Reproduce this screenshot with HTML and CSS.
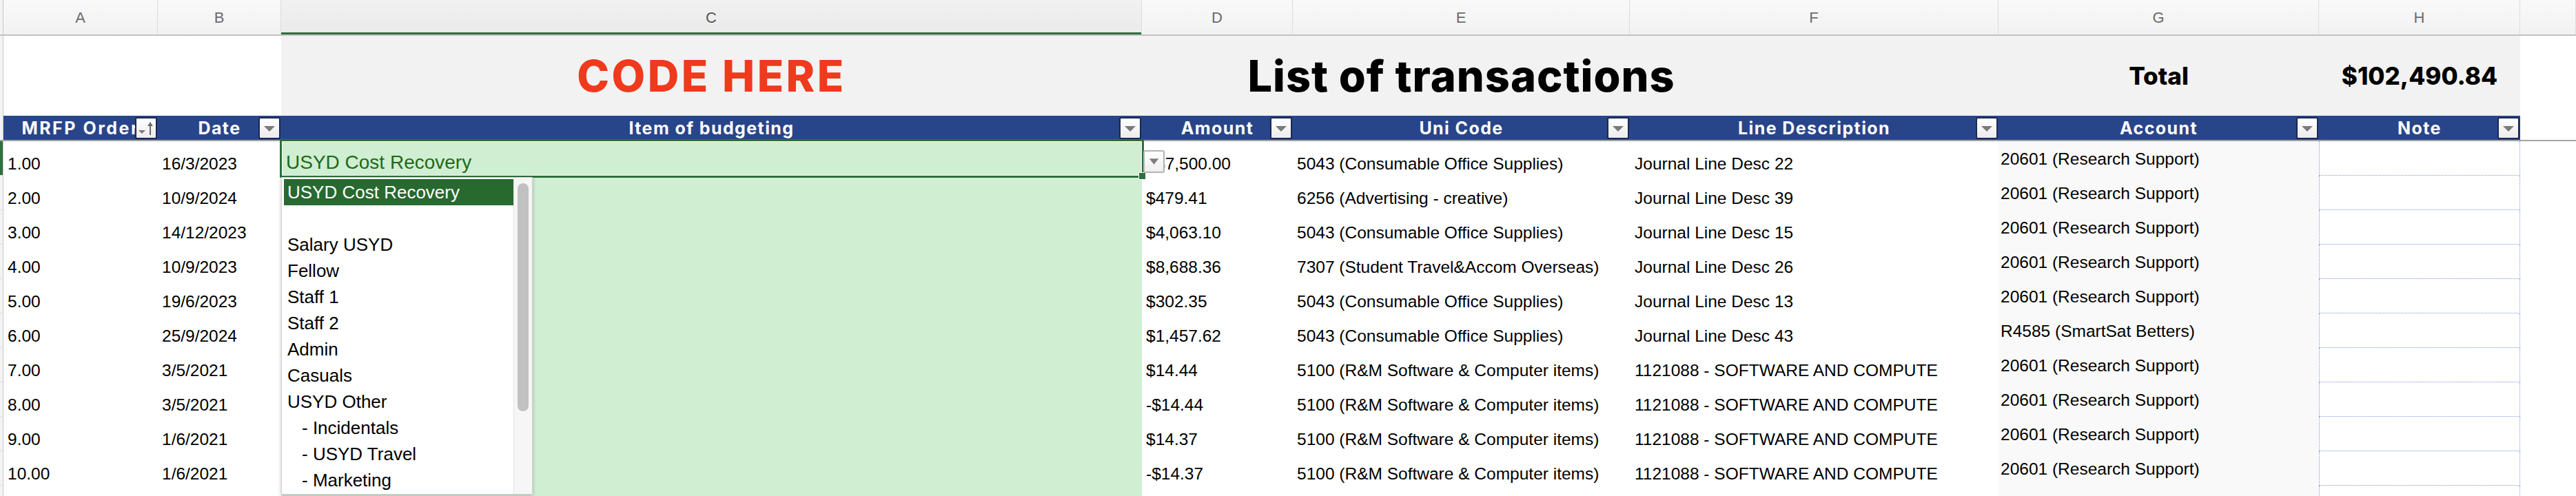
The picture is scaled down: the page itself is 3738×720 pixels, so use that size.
FILE: index.html
```html
<!DOCTYPE html>
<html>
<head>
<meta charset="utf-8">
<link rel="stylesheet" href="styles.css">
</head>
<body>
<div class="sheet">
  <div class="row colhead">
    <div class="gutter"></div>
    <div class="ch">A</div>
    <div class="ch">B</div>
    <div class="ch ch-sel">C</div>
    <div class="ch">D</div>
    <div class="ch">E</div>
    <div class="ch">F</div>
    <div class="ch">G</div>
    <div class="ch">H</div>
    <div class="ch"></div>
  </div>

  <div class="row titlerow">
    <div class="gutter"></div>
    <div class="tc"></div>
    <div class="tc"></div>
    <div class="tc grey"><span class="code-here">CODE HERE</span></div>
    <div class="tc grey"></div>
    <div class="tc grey"><span class="list-title">List of transactions</span></div>
    <div class="tc grey"></div>
    <div class="tc grey"><span class="total">Total</span></div>
    <div class="tc grey"><span class="total">$102,490.84</span></div>
    <div class="tc"></div>
  </div>

  <div class="row thead">
    <div class="gutter"></div>
    <div class="th th-wide"><span>MRFP Order</span>
      <div class="fbtn"><svg width="28" height="28" viewBox="0 0 28 28"><polygon points="3,17 13,17 8,22" fill="#787878"/><path d="M20 24 V9" stroke="#6a6a6a" stroke-width="2"/><polygon points="16,11 20,5 24,11" fill="#6a6a6a"/></svg></div>
    </div>
    <div class="th"><span>Date</span><div class="fbtn"><svg width="28" height="28" viewBox="0 0 28 28"><polygon points="6,11 22,11 14,19" fill="#7a7a7a"/></svg></div></div>
    <div class="th"><span>Item of budgeting</span><div class="fbtn"><svg width="28" height="28" viewBox="0 0 28 28"><polygon points="6,11 22,11 14,19" fill="#7a7a7a"/></svg></div></div>
    <div class="th"><span>Amount</span><div class="fbtn"><svg width="28" height="28" viewBox="0 0 28 28"><polygon points="6,11 22,11 14,19" fill="#7a7a7a"/></svg></div></div>
    <div class="th"><span>Uni Code</span><div class="fbtn"><svg width="28" height="28" viewBox="0 0 28 28"><polygon points="6,11 22,11 14,19" fill="#7a7a7a"/></svg></div></div>
    <div class="th"><span>Line Description</span><div class="fbtn"><svg width="28" height="28" viewBox="0 0 28 28"><polygon points="6,11 22,11 14,19" fill="#7a7a7a"/></svg></div></div>
    <div class="th"><span>Account</span><div class="fbtn"><svg width="28" height="28" viewBox="0 0 28 28"><polygon points="6,11 22,11 14,19" fill="#7a7a7a"/></svg></div></div>
    <div class="th"><span>Note</span><div class="fbtn"><svg width="28" height="28" viewBox="0 0 28 28"><polygon points="6,11 22,11 14,19" fill="#7a7a7a"/></svg></div></div>
    <div class="th-blank"></div>
  </div>

  <div class="row data">
    <div class="gutter gsel"></div>
    <div class="td">1.00</div><div class="td">16/3/2023</div>
    <div class="td item sel">USYD Cost Recovery
      <div class="handle"></div>
      <div class="ddbtn"><svg width="28" height="28" viewBox="0 0 28 28"><polygon points="7,9 21,9 14,18" fill="#7d7d7d"/></svg></div>
      <div class="dropdown">
        <ul class="dlist">
          <li class="on">USYD Cost Recovery</li>
          <li></li>
          <li>Salary USYD</li>
          <li>Fellow</li>
          <li>Staff 1</li>
          <li>Staff 2</li>
          <li>Admin</li>
          <li>Casuals</li>
          <li>USYD Other</li>
          <li class="sub">- Incidentals</li>
          <li class="sub">- USYD Travel</li>
          <li class="sub">- Marketing</li>
        </ul>
        <div class="track"><div class="thumb"></div></div>
      </div>
    </div>
    <div class="td amt1">$7,500.00</div><div class="td">5043 (Consumable Office Supplies)</div><div class="td pf">Journal Line Desc 22</div><div class="td acct">20601 (Research Support)</div><div class="td note"></div><div class="td"></div>
  </div>
  <div class="row data">
    <div class="gutter"></div>
    <div class="td">2.00</div><div class="td">10/9/2024</div><div class="td item"></div>
    <div class="td">$479.41</div><div class="td">6256 (Advertising - creative)</div><div class="td pf">Journal Line Desc 39</div><div class="td acct">20601 (Research Support)</div><div class="td note"></div><div class="td"></div>
  </div>
  <div class="row data">
    <div class="gutter"></div>
    <div class="td">3.00</div><div class="td">14/12/2023</div><div class="td item"></div>
    <div class="td">$4,063.10</div><div class="td">5043 (Consumable Office Supplies)</div><div class="td pf">Journal Line Desc 15</div><div class="td acct">20601 (Research Support)</div><div class="td note"></div><div class="td"></div>
  </div>
  <div class="row data">
    <div class="gutter"></div>
    <div class="td">4.00</div><div class="td">10/9/2023</div><div class="td item"></div>
    <div class="td">$8,688.36</div><div class="td">7307 (Student Travel&amp;Accom Overseas)</div><div class="td pf">Journal Line Desc 26</div><div class="td acct">20601 (Research Support)</div><div class="td note"></div><div class="td"></div>
  </div>
  <div class="row data">
    <div class="gutter"></div>
    <div class="td">5.00</div><div class="td">19/6/2023</div><div class="td item"></div>
    <div class="td">$302.35</div><div class="td">5043 (Consumable Office Supplies)</div><div class="td pf">Journal Line Desc 13</div><div class="td acct">20601 (Research Support)</div><div class="td note"></div><div class="td"></div>
  </div>
  <div class="row data">
    <div class="gutter"></div>
    <div class="td">6.00</div><div class="td">25/9/2024</div><div class="td item"></div>
    <div class="td">$1,457.62</div><div class="td">5043 (Consumable Office Supplies)</div><div class="td pf">Journal Line Desc 43</div><div class="td acct">R4585 (SmartSat Betters)</div><div class="td note"></div><div class="td"></div>
  </div>
  <div class="row data">
    <div class="gutter"></div>
    <div class="td">7.00</div><div class="td">3/5/2021</div><div class="td item"></div>
    <div class="td">$14.44</div><div class="td">5100 (R&amp;M Software &amp; Computer items)</div><div class="td pf">1121088 - SOFTWARE AND COMPUTE</div><div class="td acct">20601 (Research Support)</div><div class="td note"></div><div class="td"></div>
  </div>
  <div class="row data">
    <div class="gutter"></div>
    <div class="td">8.00</div><div class="td">3/5/2021</div><div class="td item"></div>
    <div class="td">-$14.44</div><div class="td">5100 (R&amp;M Software &amp; Computer items)</div><div class="td pf">1121088 - SOFTWARE AND COMPUTE</div><div class="td acct">20601 (Research Support)</div><div class="td note"></div><div class="td"></div>
  </div>
  <div class="row data">
    <div class="gutter"></div>
    <div class="td">9.00</div><div class="td">1/6/2021</div><div class="td item"></div>
    <div class="td">$14.37</div><div class="td">5100 (R&amp;M Software &amp; Computer items)</div><div class="td pf">1121088 - SOFTWARE AND COMPUTE</div><div class="td acct">20601 (Research Support)</div><div class="td note"></div><div class="td"></div>
  </div>
  <div class="row data">
    <div class="gutter"></div>
    <div class="td">10.00</div><div class="td">1/6/2021</div><div class="td item"></div>
    <div class="td">-$14.37</div><div class="td">5100 (R&amp;M Software &amp; Computer items)</div><div class="td pf">1121088 - SOFTWARE AND COMPUTE</div><div class="td acct">20601 (Research Support)</div><div class="td note"></div><div class="td"></div>
  </div>
  <div class="row data">
    <div class="gutter"></div>
    <div class="td"></div><div class="td"></div><div class="td item"></div>
    <div class="td"></div><div class="td"></div><div class="td"></div><div class="td acct"></div><div class="td note"></div><div class="td"></div>
  </div>
</div>
</body>
</html>
```

FILE: styles.css
```css
html, body {
  margin: 0;
  padding: 0;
}
body {
  width: 3738px;
  height: 720px;
  overflow: hidden;
  background: #ffffff;
  font-family: "Liberation Sans", Arial, sans-serif;
}
.sheet {
  display: flex;
  flex-direction: column;
}
.row {
  display: grid;
  grid-template-columns: 5px 224px 179px 1249px 219px 489px 535px 465px 292px 81px;
}
.gutter {
  background: #f3f3f3;
  border-right: 1px solid #c8c8c8;
  box-sizing: border-box;
}

/* column letters */
.colhead {
  height: 52px;
  box-sizing: border-box;
  border-bottom: 2px solid #c3c3c3;
}
.ch {
  background: linear-gradient(#f9f9f9, #f2f2f2);
  border-right: 1px solid #dcdcdc;
  color: #6b6b6b;
  font-size: 22px;
  display: flex;
  align-items: center;
  justify-content: center;
  padding-top: 2px;
}
.ch-sel {
  background: linear-gradient(#f1f1f1, #eaeaea);
  box-shadow: inset 0 -3px 0 #2f6e3e;
  color: #555;
}

/* title row */
.titlerow {
  height: 116px;
}
.tc {
  background: #ffffff;
  display: flex;
  align-items: center;
  justify-content: center;
  white-space: nowrap;
}
.tc.grey {
  background: #f2f2f2;
}
.code-here {
  font-family: Inter, "Liberation Sans", sans-serif;
  font-weight: 800;
  font-size: 63px;
  color: #ef3a1d;
  letter-spacing: 3.5px;
}
.list-title {
  position: relative;
  z-index: 1;
  font-family: Inter, "Liberation Sans", sans-serif;
  font-weight: 800;
  font-size: 63px;
  color: #000;
  letter-spacing: 1px;
}
.total {
  font-family: Inter, "Liberation Sans", sans-serif;
  font-weight: 800;
  font-size: 35px;
  color: #000;
  letter-spacing: 0;
}

/* blue table header */
.thead {
  height: 37px;
  box-sizing: border-box;
  border-bottom: 2px solid #a3a3a3;
}
.thead .gutter {
  background: #f3f3f3;
}
.th {
  position: relative;
  background: #29458a;
  color: #ffffff;
  font-family: Inter, "Liberation Sans", sans-serif;
  font-weight: 700;
  font-size: 25px;
  letter-spacing: 1.4px;
  display: flex;
  align-items: center;
  justify-content: center;
  white-space: nowrap;
  overflow: hidden;
}
.th.th-wide {
  letter-spacing: 2.5px;
}
.th-blank {
  background: #ffffff;
}
.fbtn {
  position: absolute;
  right: 1px;
  top: 2px;
  width: 32px;
  height: 32px;
  box-sizing: border-box;
  border: 2px solid #1b2853;
  border-radius: 3px;
  background: linear-gradient(#ffffff, #ececec);
  display: flex;
  align-items: center;
  justify-content: center;
}

/* data rows */
.data {
  height: 50px;
}
.data .gutter {
  border-bottom: 1px solid #dedede;
}
.data .gsel {
  background: #2f6e3e;
}
.td {
  box-sizing: border-box;
  font-size: 24.5px;
  line-height: 28px;
  color: #000;
  padding: 19px 0 0 6px;
  white-space: nowrap;
  overflow: hidden;
}
.td.pf {
  padding-left: 7px;
}
.td.amt1 {
  padding-left: 20px;
}
.td.item {
  background: #cfeed2;
  overflow: visible;
  position: relative;
}
.td.acct {
  background: #f9f9f9;
  padding-left: 3px;
  padding-top: 12px;
}
.td.note {
  border-left: 1px dotted #7a98e6;
  border-right: 1px dotted #7a98e6;
  border-bottom: 1px dotted #7a98e6;
}

/* selected cell */
.td.sel {
  font-size: 28px;
  line-height: 32px;
  padding-top: 15px;
  padding-left: 7px;
  color: #1f6a17;
  z-index: 2;
}
.td.sel::after {
  content: "";
  position: absolute;
  left: -2px;
  top: -3px;
  right: -3px;
  bottom: -3px;
  border: 3px solid #2f6e3e;
  box-shadow: inset 0 0 0 1px #ffffff;
  pointer-events: none;
}
.handle {
  position: absolute;
  right: -6px;
  bottom: -6px;
  width: 9px;
  height: 9px;
  background: #2f6e3e;
  border: 1px solid #ffffff;
  z-index: 3;
}
.ddbtn {
  position: absolute;
  right: -33px;
  top: 13px;
  width: 31px;
  height: 33px;
  box-sizing: border-box;
  border: 2px solid #b3b3b3;
  border-radius: 3px;
  background: linear-gradient(#ffffff, #efefef);
  display: flex;
  align-items: center;
  justify-content: center;
  z-index: 4;
}

/* dropdown list */
.dropdown {
  position: absolute;
  left: 0;
  top: 52px;
  width: 365px;
  height: 461px;
  box-sizing: border-box;
  background: #ffffff;
  border: 1px solid #d2d2d2;
  box-shadow: 0 1px 5px rgba(0, 0, 0, 0.25);
  display: flex;
  z-index: 5;
}
.dlist {
  list-style: none;
  margin: 0;
  padding: 2px 0 0 3px;
  flex: 1;
  color: #000;
  font-size: 26px;
}
.dlist li {
  height: 38px;
  line-height: 38px;
  padding-left: 5px;
}
.dlist li.on {
  background: #27692f;
  color: #ffffff;
}
.dlist li.sub {
  padding-left: 26px;
}
.track {
  width: 27px;
  background: #f6f6f6;
  border-left: 1px solid #e2e2e2;
  display: flex;
  justify-content: center;
  padding-top: 8px;
  box-sizing: border-box;
}
.thumb {
  width: 16px;
  height: 331px;
  border-radius: 8px;
  background: #c1c1c1;
}
```
